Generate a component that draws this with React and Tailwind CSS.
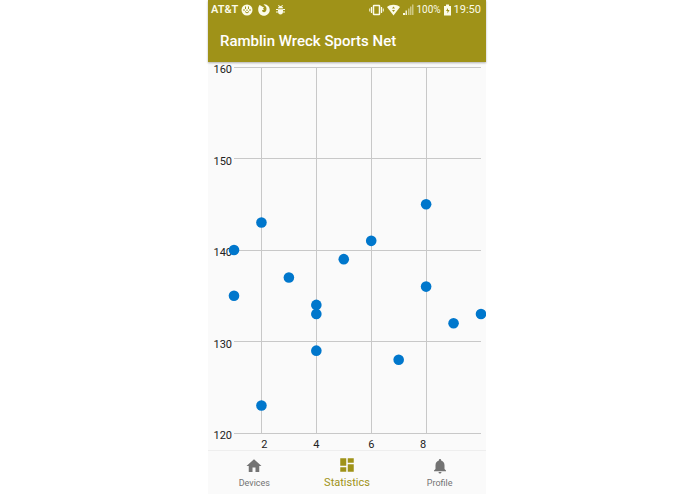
import { useState } from "react";
import { MdHome, MdDashboard, MdNotifications } from "react-icons/md";

const points = [
  [1, 140], [1, 135], [2, 143], [2, 123], [3, 137], [4, 134], [4, 133], [4, 129],
  [5, 139], [6, 141], [7, 128], [8, 145], [8, 136], [9, 132], [10, 133],
];

// The outer tick labels are pulled in towards the middle of the axis
const xTicks = [
  { value: 2, shift: 3 },
  { value: 4, shift: 0 },
  { value: 6, shift: 0 },
  { value: 8, shift: -3 },
];
const yTicks = [160, 150, 140, 130, 120];

const plot = { left: 26, right: 273, top: 5, bottom: 371 };
const scaleX = (v) => plot.left + ((v - 1) / 9) * (plot.right - plot.left);
const scaleY = (v) => plot.bottom - ((v - 120) / 40) * (plot.bottom - plot.top);

const tabs = [
  { name: "Devices", Icon: MdHome },
  { name: "Statistics", Icon: MdDashboard },
  { name: "Profile", Icon: MdNotifications },
];

function StatusBar() {
  return (
    <div className="flex h-5 items-center justify-between pl-[3px] pr-[5px] text-[#fbfbe8]">
      <div className="flex items-center gap-[3px]">
        <span className="text-[11px] font-semibold leading-5">AT&amp;T</span>
        {/* Ball */}
        <svg className="h-3 w-3" viewBox="0 0 24 24" fill="none">
          <circle cx="12" cy="12" r="11" fill="currentColor" />
          <path d="M9 5v5M15 5v5M4 12h4M16 12h4M12 11v3M8 15l4 3 4-3" stroke="#9f9218" strokeWidth="2" />
        </svg>
        {/* Browser */}
        <svg className="ml-[2px] h-3 w-3" viewBox="0 0 24 24" fill="currentColor">
          <path d="M3 2C1 5 0 9 .5 13 1 19 6 23.500 12 23.500S23.500 18.500 23.500 12C23.500 6 19 1 13 .5l-2 1c4 2 6 4 6 8 0 4-2 7-5 7-2 0-4-2-4-4l4-1-2-2 2-3-3-1-3-2z" />
        </svg>
        {/* Debugging */}
        <svg className="ml-[3px] h-[10px] w-[9px]" viewBox="0 0 18 20" fill="none">
          <path d="M4 7a5 5 0 0 1 10 0zM4 8h10v5a5 6 0 0 1-10 0z" fill="currentColor" />
          <path d="M5 0l2 3M13 0l-2 3M0 9h4M18 9h-4M0 14h4M18 14h-4" stroke="currentColor" strokeWidth="2" />
          <path d="M4 8h10" stroke="#9f9218" strokeWidth="1" />
        </svg>
      </div>

      <div className="flex items-center">
        {/* Vibrate */}
        <svg className="h-3 w-[15px]" viewBox="0 0 30 24" fill="none" stroke="currentColor">
          <rect x="9" y="3" width="12" height="18" rx="1" strokeWidth="3" />
          <path d="M5 6v12M25 6v12" strokeWidth="2.500" />
          <path d="M1.500 9v6M28.500 9v6" strokeWidth="2" />
        </svg>
        {/* Wi-Fi */}
        <svg className="ml-[3px] h-3 w-[13px]" viewBox="0 0 26 24">
          <path d="M0 6C7 0 19 0 26 6L13 23z" fill="currentColor" />
          <path d="M10 9l3-4 3 4zM10 12l3 4 3-4z" fill="#9f9218" />
        </svg>
        {/* Signal */}
        <svg className="ml-[3px] h-3 w-[11px]" viewBox="0 0 22 24" fill="currentColor">
          <rect x="0" y="18" width="4" height="4" />
          <rect x="5" y="13" width="3" height="9" opacity="0.9" />
          <rect x="10" y="9" width="3" height="13" opacity="0.5" />
          <rect x="14" y="5" width="3" height="17" opacity="0.5" />
          <rect x="18" y="1" width="3" height="21" opacity="0.5" />
        </svg>
        <span className="ml-[2px] text-[10px] leading-5">100%</span>
        {/* Battery */}
        <svg className="ml-[3px] h-3 w-[7px]" viewBox="0 0 14 24">
          <path d="M4 1h6v3h4v19H0V4h4z" fill="currentColor" />
          <path d="M8 8l-4 6h3v5l4-7H8z" fill="#9f9218" />
        </svg>
        <span className="ml-[3px] text-[11px] leading-5">19:50</span>
      </div>
    </div>
  );
}

function ScatterChart() {
  return (
    <svg viewBox="0 0 278 388" className="block w-full" role="img" aria-label="Statistics chart">
      <g stroke="#c8c8c8" strokeWidth="1" shapeRendering="crispEdges">
        {yTicks.map((t) => (
          <line key={t} x1={plot.left} x2={plot.right} y1={scaleY(t)} y2={scaleY(t)} />
        ))}
        {xTicks.map(({ value }) => (
          <line key={value} x1={scaleX(value)} x2={scaleX(value)} y1={plot.top} y2={plot.bottom} />
        ))}
      </g>
      <g fill="#222222" fontSize="11">
        {yTicks.map((t) => (
          <text key={t} x="24" y={scaleY(t) + 6} textAnchor="end">{t}</text>
        ))}
        {xTicks.map(({ value, shift }) => (
          <text key={value} x={scaleX(value) + shift} y="386" textAnchor="middle">{value}</text>
        ))}
      </g>
      <g fill="#0077cc">
        {points.map(([x, y]) => (
          <circle key={`${x}-${y}`} cx={scaleX(x)} cy={scaleY(y)} r="5.3" />
        ))}
      </g>
    </svg>
  );
}

function App() {
  const [active, setActive] = useState("Statistics");

  return (
    <div className="flex min-h-screen justify-center bg-white pr-px font-['Roboto',sans-serif]">
      <div className="flex w-2/5 min-w-[278px] flex-col bg-[#fafafa]">
        <header className="z-10 bg-[#9f9218] shadow-[0_1px_2px_rgba(0,0,0,0.3)]">
          <StatusBar />
          <h1 className="px-3 text-[15px] font-medium leading-[42px] text-white">
            Ramblin Wreck Sports Net
          </h1>
        </header>

        <main className="flex-1 overflow-hidden">
          <ScatterChart />
        </main>

        <nav className="grid h-11 grid-cols-3 border-t border-[#eeeeee]">
          {tabs.map(({ name, Icon }) => (
            <button
              key={name}
              type="button"
              onClick={() => setActive(name)}
              className={
                active === name
                  ? "flex flex-col items-center gap-px pt-[5px] text-[11px] leading-4 text-[#9f9218]"
                  : "flex flex-col items-center pt-1.5 text-[9px] leading-4 text-[#737373]"
              }
            >
              <Icon size={18} />
              {name}
            </button>
          ))}
        </nav>
      </div>
    </div>
  );
}

export default App;
